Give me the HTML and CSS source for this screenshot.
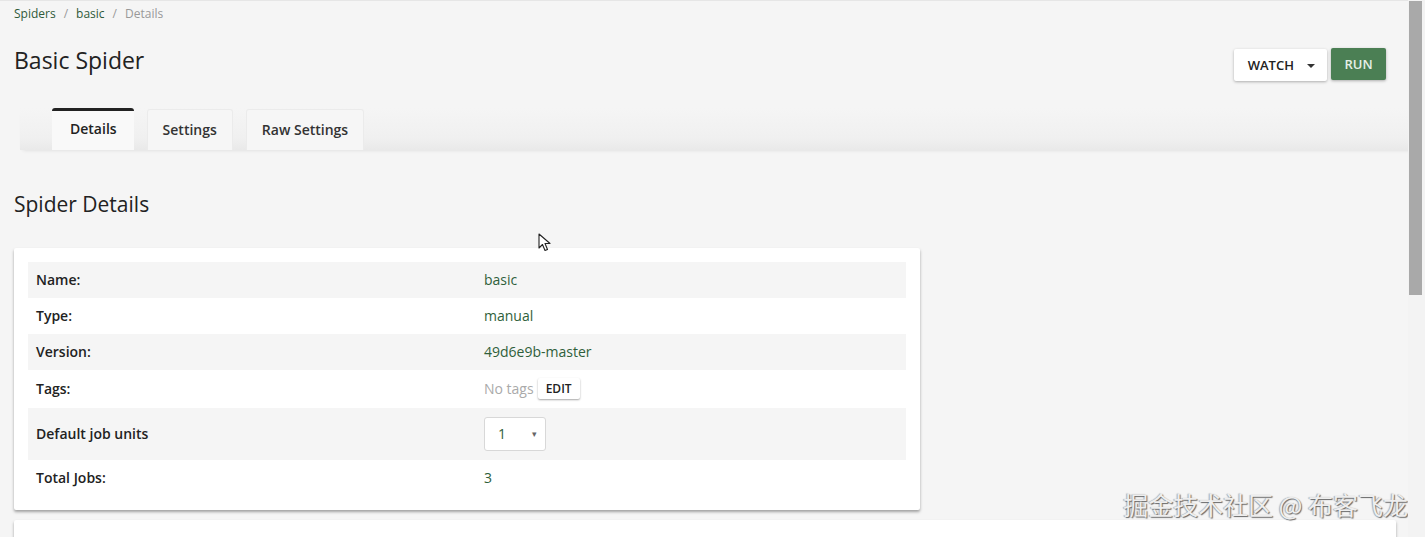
FILE: index.html
```html
<!DOCTYPE html>
<html lang="en">

<head>
    <meta charset="UTF-8">
    <meta name="viewport" content="width=device-width, initial-scale=1.0">
    <title>Basic Spider</title>
    <link rel="stylesheet" href="styles.css">
</head>

<body>
    <div class="app">
        <div class="page">
            <nav class="breadcrumb">
                <a href="#">Spiders</a>
                <span class="sep">/</span>
                <a href="#">basic</a>
                <span class="sep">/</span>
                <span class="current">Details</span>
            </nav>

            <header class="page-header">
                <h1>Basic Spider</h1>
                <div class="actions">
                    <button class="btn btn-watch">WATCH <span class="caret"></span></button>
                    <button class="btn btn-run">RUN</button>
                </div>
            </header>

            <div class="tabs">
                <a class="tab active" href="#">Details</a>
                <a class="tab" href="#">Settings</a>
                <a class="tab" href="#">Raw Settings</a>
            </div>

            <h2 class="section-title">Spider Details</h2>

            <div class="card">
                <div class="row">
                    <div class="label">Name:</div>
                    <div class="value">basic</div>
                </div>
                <div class="row">
                    <div class="label">Type:</div>
                    <div class="value">manual</div>
                </div>
                <div class="row">
                    <div class="label">Version:</div>
                    <div class="value">49d6e9b-master</div>
                </div>
                <div class="row">
                    <div class="label">Tags:</div>
                    <div class="value"><span class="muted">No tags</span><button class="btn-edit">EDIT</button></div>
                </div>
                <div class="row row-tall">
                    <div class="label">Default job units</div>
                    <div class="value">
                        <div class="select">1 <span class="select-caret">&#9662;</span></div>
                    </div>
                </div>
                <div class="row">
                    <div class="label">Total Jobs:</div>
                    <div class="value">3</div>
                </div>
            </div>

            <div class="card card-next"></div>

            <!-- mouse pointer -->
            <svg class="pointer" width="14" height="19" viewBox="0 0 14 19">
                <path d="M1 1 L1 15 L4.5 11.5 L7 17.5 L9.5 16.5 L7 10.5 L12 10.5 Z" fill="#fff" stroke="#222"
                    stroke-width="1.1" stroke-linejoin="round" />
            </svg>

            <div class="watermark">掘金技术社区 @ 布客飞龙</div>
        </div>
        <div class="scrollbar">
            <div class="thumb"></div>
        </div>
    </div>
</body>

</html>
```

FILE: styles.css
```css
* {
    box-sizing: border-box;
    margin: 0;
    padding: 0;
}

html,
body {
    height: 100%;
    overflow: hidden;
}

body {
    background-color: #f5f5f5;
    font-family: "Open Sans", "Noto Sans", sans-serif;
    color: #222;
    font-size: 14px;
}

.app {
    display: flex;
    height: 100%;
}

.page {
    flex: 1;
    position: relative;
    padding: 0 22px 0 14px;
    border-top: 1px solid #e6e6e6;
    overflow: hidden;
}

/* breadcrumb */
.breadcrumb {
    padding-top: 4px;
    font-size: 12px;
    line-height: 17px;
    display: flex;
    gap: 8px;
}

.breadcrumb a {
    color: #2f5a3a;
    text-decoration: none;
}

.breadcrumb .sep,
.breadcrumb .current {
    color: #999;
}

/* header */
.page-header {
    display: flex;
    justify-content: space-between;
    align-items: flex-start;
    margin-top: 25px;
}

.page-header h1 {
    font-size: 23px;
    font-weight: 400;
    line-height: 30px;
    color: #222;
    margin-top: -2px;
}

.actions {
    display: flex;
    gap: 4px;
    margin-top: 1px;
}

.btn {
    border: none;
    border-radius: 2px;
    font-family: inherit;
    font-size: 13px;
    font-weight: 600;
    height: 32px;
    cursor: pointer;
}

.btn-watch {
    background-color: #fff;
    color: #222;
    width: 93px;
    padding-left: 2px;
    box-shadow: 0 1px 3px rgba(0, 0, 0, 0.3);
    margin-top: 1px;
}

.caret {
    display: inline-block;
    margin-left: 10px;
    vertical-align: middle;
    border-left: 4px solid transparent;
    border-right: 4px solid transparent;
    border-top: 4px solid #333;
    position: relative;
    top: -1px;
}

.btn-run {
    background-color: #4b7f54;
    color: #e6efe7;
    width: 55px;
    box-shadow: 0 1px 3px rgba(0, 0, 0, 0.3);
}

/* tabs */
.tabs {
    display: flex;
    gap: 13px;
    margin: 27px -28px 0 6px;
    padding-left: 32px;
    height: 42px;
    background: linear-gradient(to bottom, #f5f5f5 0%, #f0f0f0 70%, #e9e9e9 100%);
    box-shadow: 0 3px 4px -3px rgba(0, 0, 0, 0.12);
}

.tab {
    display: flex;
    align-items: center;
    padding: 0 15px 2px;
    color: #333;
    font-weight: 600;
    text-decoration: none;
    background-color: #f6f6f6;
    border: 1px solid #ebebeb;
    border-bottom: none;
    border-radius: 3px 3px 0 0;
    height: 41px;
    margin-top: 1px;
}

.tab.active {
    color: #222;
    background-color: #f9f9f9;
    border: none;
    border-top: 3px solid #222;
    height: 42px;
    margin-top: 0;
    padding: 0 17px 4px 18px;
}

/* details card */
.section-title {
    font-size: 21px;
    font-weight: 400;
    line-height: 28px;
    margin-top: 40px;
    color: #222;
}

.card {
    background-color: #fff;
    width: 906px;
    margin-top: 30px;
    padding: 14px;
    box-shadow: 0 2px 3px rgba(0, 0, 0, 0.35);
    border-radius: 2px;
}

.row {
    display: flex;
    align-items: center;
    height: 36px;
    padding-bottom: 1px;
}

.row:nth-child(odd) {
    background-color: #f5f5f5;
}

.row:nth-child(4) {
    height: 38px;
}

.row.row-tall {
    height: 52px;
}

.label {
    width: 456px;
    padding-left: 8px;
    font-weight: 600;
    color: #222;
}

.value {
    color: #2f5f3a;
    display: flex;
    align-items: center;
}

.muted {
    color: #aaa;
}

.btn-edit {
    margin-left: 4px;
    border: none;
    background-color: #fff;
    font-family: inherit;
    font-size: 12px;
    font-weight: 600;
    color: #222;
    height: 21px;
    padding: 0 8px;
    border-radius: 2px;
    box-shadow: 0 1px 2px rgba(0, 0, 0, 0.35);
}

.select {
    width: 62px;
    height: 34px;
    border: 1px solid #d8d8d8;
    border-radius: 3px;
    background-color: #fff;
    display: flex;
    align-items: center;
    justify-content: space-between;
    padding: 0 8px 0 13px;
    color: #2f5f3a;
    font-size: 14px;
}

.select-caret {
    color: #666;
    font-size: 9px;
}

.card-next {
    width: auto;
    height: 40px;
    margin-top: 10px;
    margin-right: -10px;
}

/* overlays */
.pointer {
    position: absolute;
    left: 538px;
    top: 232px;
}

.watermark {
    position: absolute;
    right: 0;
    top: 485px;
    font-family: "Noto Sans CJK SC", sans-serif;
    font-size: 25px;
    color: #eeeeee;
    text-shadow: 1px 1px 1px #666, -1px 0 1px #aaa;
}

/* scrollbar column */
.scrollbar {
    width: 17px;
    background-color: #f3f3f3;
    padding: 1px 3px 0 1px;
}

.thumb {
    height: 294px;
    background-color: #a9a9a9;
}
```
